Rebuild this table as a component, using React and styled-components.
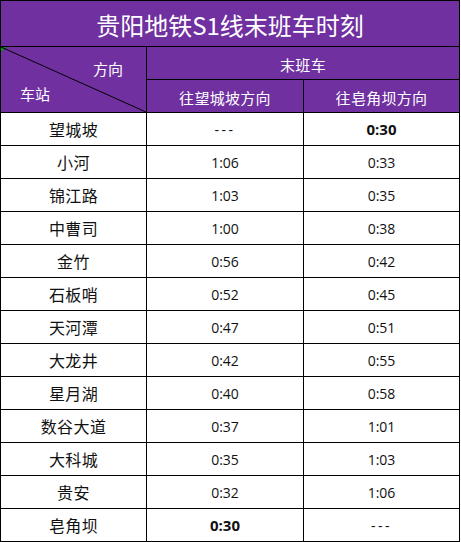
import React from "react";
import styled, { createGlobalStyle } from "styled-components";

const GlobalStyle = createGlobalStyle`
  html, body {
    margin: 0;
    padding: 0;
    background: #ffffff;
  }
  body {
    font-family: "Noto Sans CJK SC", "Noto Sans", sans-serif;
  }
`;

const PURPLE = "#7030a0";

const Sheet = styled.div`
  display: grid;
  grid-template-columns: 145px 156px 155px;
  grid-template-rows: 45px 32px 32px repeat(13, 32px);
  gap: 1px;
  padding: 1px;
  width: 458px;
  background: #000;
`;

const TitleCell = styled.div`
  grid-column: 1 / 4;
  background: ${PURPLE};
  color: #fff;
  display: flex;
  align-items: center;
  justify-content: center;
  font-size: 24px;
  padding-top: 1px;
`;

const Corner = styled.div`
  grid-row: 2 / 4;
  position: relative;
  background: ${PURPLE};
  color: #fff;
  font-size: 15px;
  display: flex;
  flex-direction: column;
  justify-content: space-between;
  padding: 12px 23px 8px 19px;
  &::before {
    content: "";
    position: absolute;
    left: 0;
    top: 0;
    border-top: 5px solid #00a000;
    border-right: 5px solid transparent;
  }
`;

const Diagonal = styled.svg`
  position: absolute;
  inset: 0;
  width: 100%;
  height: 100%;
`;

const CornerLabel = styled.span`
  position: relative;
  align-self: ${({ end }) => (end ? "flex-end" : "flex-start")};
  line-height: 20px;
`;

const HeadCell = styled.div`
  grid-column: ${({ span }) => (span ? `span ${span}` : "auto")};
  background: ${PURPLE};
  color: #fff;
  font-size: 15px;
  letter-spacing: 0.3px;
  display: flex;
  align-items: center;
  justify-content: center;
  padding-top: 2px;
`;

const StationCell = styled.div`
  background: #fff;
  color: #111;
  font-size: 16px;
  display: flex;
  align-items: center;
  justify-content: center;
  letter-spacing: 0.4px;
`;

const TimeCell = styled.div`
  background: #fff;
  color: #111;
  font-family: "Open Sans", "Noto Sans", sans-serif;
  font-size: ${({ bold }) => (bold ? "15px" : "14px")};
  font-weight: ${({ bold }) => (bold ? 700 : 400)};
  letter-spacing: ${({ dash }) => (dash ? "2.5px" : "0")};
  display: flex;
  align-items: center;
  justify-content: center;
`;

const rows = [
  ["望城坡", "---", "0:30", 2],
  ["小河", "1:06", "0:33"],
  ["锦江路", "1:03", "0:35"],
  ["中曹司", "1:00", "0:38"],
  ["金竹", "0:56", "0:42"],
  ["石板哨", "0:52", "0:45"],
  ["天河潭", "0:47", "0:51"],
  ["大龙井", "0:42", "0:55"],
  ["星月湖", "0:40", "0:58"],
  ["数谷大道", "0:37", "1:01"],
  ["大科城", "0:35", "1:03"],
  ["贵安", "0:32", "1:06"],
  ["皂角坝", "0:30", "---", 1],
];

export default function App() {
  return (
    <>
      <GlobalStyle />
      <Sheet>
        <TitleCell>贵阳地铁S1线末班车时刻</TitleCell>
        <Corner>
          <Diagonal viewBox="0 0 145 65" preserveAspectRatio="none">
            <line x1="0" y1="0" x2="145" y2="65" stroke="#000" strokeWidth="1" />
          </Diagonal>
          <CornerLabel end>方向</CornerLabel>
          <CornerLabel>车站</CornerLabel>
        </Corner>
        <HeadCell span={2}>末班车</HeadCell>
        <HeadCell>往望城坡方向</HeadCell>
        <HeadCell>往皂角坝方向</HeadCell>
        {rows.map(([name, a, b, boldCol]) => (
          <React.Fragment key={name}>
            <StationCell>{name}</StationCell>
            <TimeCell bold={boldCol === 1} dash={a === "---"}>{a}</TimeCell>
            <TimeCell bold={boldCol === 2} dash={b === "---"}>{b}</TimeCell>
          </React.Fragment>
        ))}
      </Sheet>
    </>
  );
}
